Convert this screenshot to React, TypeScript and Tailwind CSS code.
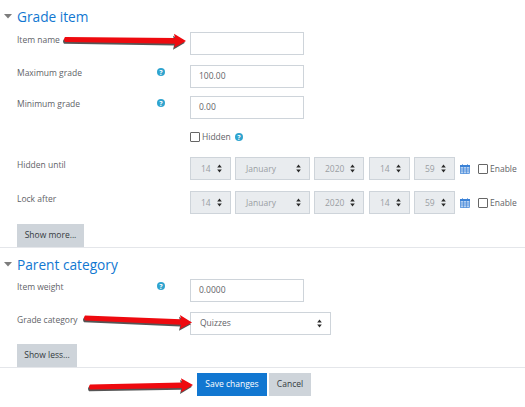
const font = "font-['Open_Sans','Noto_Sans',sans-serif]"

function HelpIcon({ className = "" }: { className?: string }) {
  return (
    <span className={`flex h-[8px] w-[8px] items-center justify-center rounded-full bg-[#2fa4cf] text-[7px] font-bold leading-none text-white ${className}`}>
      ?
    </span>
  )
}

function UpDown() {
  return (
    <svg width="5" height="9" viewBox="0 0 5 9" className="shrink-0">
      <path d="M2.5 0.5 L4.8 3.6 L0.2 3.6 Z M2.5 8.5 L4.8 5.4 L0.2 5.4 Z" fill="#2b2b2b" />
    </svg>
  )
}

function SectionTitle({ title }: { title: string }) {
  return (
    <div className="flex items-center">
      <svg width="9" height="5" viewBox="0 0 9 5" className="mb-[2px] ml-[4px] mr-[4px] shrink-0">
        <path d="M0 0 L8 0 L4 4.5 Z" fill="#7d7d7d" />
      </svg>
      <h3 className="text-[13.7px] leading-[20px] text-[#1177d1]">{title}</h3>
    </div>
  )
}

function Row({ label, help, top, children }: { label: string; help?: boolean; top: string; children: React.ReactNode }) {
  return (
    <div className={`flex items-start pl-[17px] ${top}`}>
      <div className="w-[140px] pt-[1px] text-[8.5px] leading-[14px] text-[#5f6368]">{label}</div>
      <div className="flex w-[33px] pt-[3px]">{help && <HelpIcon />}</div>
      {children}
    </div>
  )
}

function TextBox({ value = "" }: { value?: string }) {
  return (
    <div className="flex h-[23px] w-[114px] items-center border border-[#ced4da] bg-white pl-[8px] text-[8.5px] text-[#5f6368]">
      {value}
    </div>
  )
}

function DisabledSelect({ value, width }: { value: string; width: string }) {
  return (
    <div className={`flex h-[23px] items-center justify-between border border-[#ced4da] bg-[#e9ecef] pl-[10px] pr-[8px] text-[8.5px] text-[#9a9ea3] ${width}`}>
      <span className="pt-[2px]">{value}</span>
      <UpDown />
    </div>
  )
}

function DateRow() {
  return (
    <div className="flex items-center">
      <DisabledSelect value="14" width="w-[41px]" />
      <DisabledSelect value="January" width="ml-[4px] w-[75px]" />
      <DisabledSelect value="2020" width="ml-[4px] w-[50px]" />
      <DisabledSelect value="14" width="ml-[5px] w-[41px]" />
      <DisabledSelect value="59" width="ml-[4px] w-[41px]" />
      <svg width="10" height="10" viewBox="0 0 10 10" className="ml-[5px]">
        <rect x="0.5" y="1.5" width="9" height="8" fill="#b5d0f0" stroke="#3b82d6" strokeWidth="0.7" />
        <rect x="0" y="1" width="10" height="2" fill="#3b82d6" />
        <path d="M2.5 0 V2 M7.5 0 V2 M0.5 5 H9.5 M0.5 7 H9.5 M3.5 3 V9.5 M6.5 3 V9.5" stroke="#3b82d6" strokeWidth="0.6" />
      </svg>
      <span className="ml-[8px] h-[10px] w-[10px] rounded-[1px] border border-[#666] bg-white" />
      <span className="ml-[2px] pt-[2px] text-[8.5px] text-[#5f6368]">Enable</span>
    </div>
  )
}

function Arrow({ className, width, tailY, tipY }: { className: string; width: number; tailY: number; tipY: number }) {
  const neck = width - 12
  const base = width - 13
  const neckY = tailY + ((tipY - tailY) * neck) / width
  const d = `M2 ${tailY - 2.4} L${neck} ${neckY - 2.8} L${base} ${neckY - 7} L${width - 1} ${tipY} L${base} ${neckY + 7} L${neck} ${neckY + 2.8} L2 ${tailY + 2.4} Q0 ${tailY} 2 ${tailY - 2.4} Z`
  return (
    <svg width={width} height="20" viewBox={`0 0 ${width} 20`} className={`absolute ${className}`}>
      <path d={d} fill="#1c1c1c" opacity="0.75" transform="translate(-1 1.8)" />
      <path d={d} fill="#ee0a0f" />
    </svg>
  )
}

export default function App() {
  return (
    <div className={`relative h-[407px] w-[525px] overflow-hidden bg-white pt-[7px] ${font}`}>
      <SectionTitle title="Grade item" />
      <Row label="Item name" top="mt-[5px]">
        <TextBox />
      </Row>
      <Row label="Maximum grade" help top="mt-[10px]">
        <TextBox value="100.00" />
      </Row>
      <Row label="Minimum grade" help top="mt-[8px]">
        <TextBox value="0.00" />
      </Row>
      <div className="mt-[12px] flex h-[12px] items-center pl-[190px] text-[8.5px] text-[#5f6368]">
        <span className="mr-[2px] h-[10px] w-[10px] rounded-[1px] border border-[#666] bg-white" />
        <span>Hidden</span>
        <HelpIcon className="ml-[4px]" />
      </div>
      <Row label="Hidden until" top="mt-[14px]">
        <DateRow />
      </Row>
      <Row label="Lock after" top="mt-[11px]">
        <DateRow />
      </Row>
      <div className="mt-[10px] border-b border-[#e4e6ea] pl-[17px]">
        <button className="block h-[23px] w-[67px] bg-[#ced4da] text-[8.5px] text-[#343a40]">Show more...</button>
      </div>
      <div className="mt-[7px]">
        <SectionTitle title="Parent category" />
      </div>
      <Row label="Item weight" help top="mt-[4px]">
        <TextBox value="0.0000" />
      </Row>
      <Row label="Grade category" top="mt-[10px]">
        <div className="flex h-[23px] w-[141px] items-center justify-between border border-[#ced4da] bg-white pl-[9px] pr-[8px] text-[8.5px] text-[#5f6368]">
          <span>Quizzes</span>
          <UpDown />
        </div>
      </Row>
      <div className="mt-[9px] border-b border-[#e4e6ea] pl-[17px]">
        <button className="block h-[23px] w-[60px] bg-[#ced4da] text-[8.5px] text-[#343a40]">Show less...</button>
      </div>
      <div className="mt-[5px] flex pl-[197px]">
        <button className="h-[23px] w-[70px] bg-[#1177d1] text-[8.5px] text-white">Save changes</button>
        <button className="ml-[2px] h-[23px] w-[42px] bg-[#ced4da] text-[8.5px] text-[#343a40]">Cancel</button>
      </div>
      <Arrow className="left-[63px] top-[32px]" width={124} tailY={7.5} tipY={9} />
      <Arrow className="left-[83px] top-[313px]" width={110} tailY={5} tipY={9.5} />
      <Arrow className="left-[88px] top-[376px]" width={106} tailY={11} tipY={9} />
    </div>
  )
}
